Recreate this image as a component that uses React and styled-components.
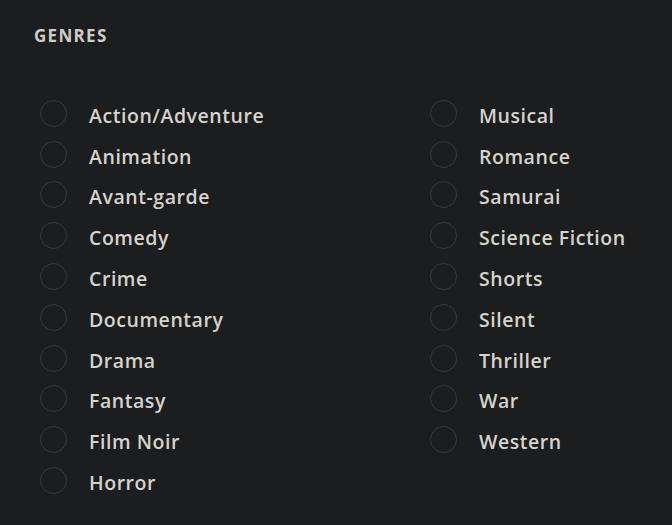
import React from 'react';
import styled, { createGlobalStyle } from 'styled-components';

const GlobalStyle = createGlobalStyle`
  html, body {
    margin: 0;
    padding: 0;
    background: #1c1d1f;
  }
  body {
    font-family: 'Open Sans', 'Noto Sans', sans-serif;
  }
`;

const genres = [
  'Action/Adventure', 'Animation', 'Avant-garde', 'Comedy', 'Crime',
  'Documentary', 'Drama', 'Fantasy', 'Film Noir', 'Horror',
  'Musical', 'Romance', 'Samurai', 'Science Fiction', 'Shorts',
  'Silent', 'Thriller', 'War', 'Western',
];

const Panel = styled.div`
  width: 672px;
  height: 525px;
  box-sizing: border-box;
  padding: 26px 0 0 34px;
  background: #1c1d1f;
`;

const Heading = styled.h3`
  margin: 0;
  font-size: 17px;
  font-weight: 700;
  letter-spacing: 1.3px;
  color: #cfccc6;
  line-height: 20px;
`;

const Columns = styled.div`
  display: grid;
  grid-template-columns: 390px 1fr;
  margin-top: 47px;
  padding-left: 6px;
`;

const List = styled.ul`
  list-style: none;
  margin: 0;
  padding: 0;
  display: flex;
  flex-direction: column;
`;

const Row = styled.li`
  display: flex;
  align-items: center;
  height: 40.8px;
  cursor: pointer;
`;

const Radio = styled.span`
  width: 27px;
  height: 27px;
  box-sizing: border-box;
  border-radius: 50%;
  border: 1.5px solid #3a3b3d;
  flex-shrink: 0;
`;

const Label = styled.span`
  margin-left: 22px;
  font-size: 19.5px;
  font-weight: 600;
  color: #d6d3cd;
  letter-spacing: 0.55px;
  position: relative;
  top: 2px;
`;

const Column = ({ items }) => (
  <List>
    {items.map((g) => (
      <Row key={g}>
        <Radio />
        <Label>{g}</Label>
      </Row>
    ))}
  </List>
);

export default function App() {
  return (
    <>
      <GlobalStyle />
      <Panel>
        <Heading>GENRES</Heading>
        <Columns>
          <Column items={genres.slice(0, 10)} />
          <Column items={genres.slice(10)} />
        </Columns>
      </Panel>
    </>
  );
}
